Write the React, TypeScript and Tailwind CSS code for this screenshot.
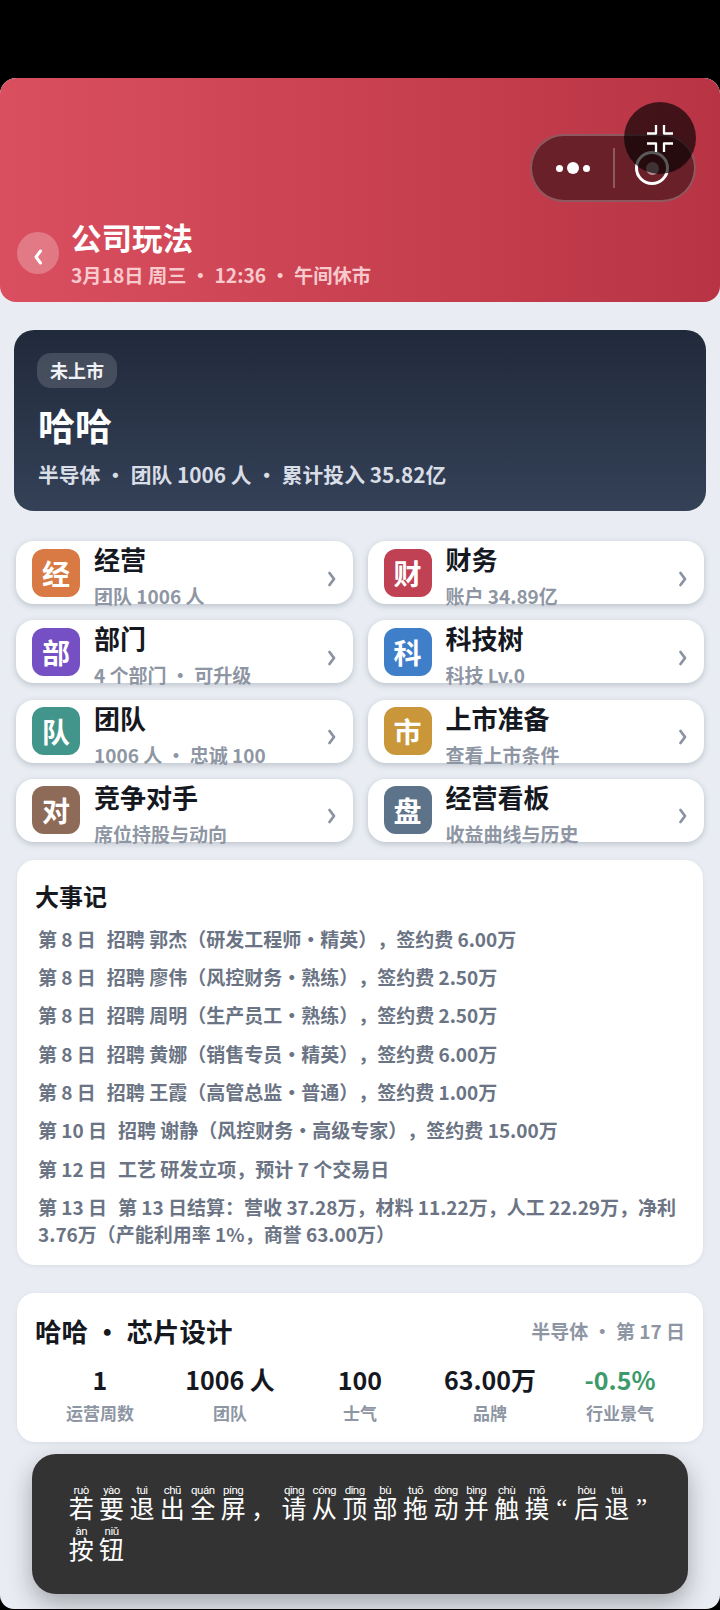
const cjk = "font-['Noto_Sans_CJK_SC','Noto_Sans',sans-serif]";

const menus = [
  { icon: "经", color: "bg-[#d97a45]", title: "经营", sub: "团队 1006 人" },
  { icon: "财", color: "bg-[#bf4153]", title: "财务", sub: "账户 34.89亿" },
  { icon: "部", color: "bg-[#7450c4]", title: "部门", sub: "4 个部门 · 可升级" },
  { icon: "科", color: "bg-[#3f7fc9]", title: "科技树", sub: "科技 Lv.0" },
  { icon: "队", color: "bg-[#41958a]", title: "团队", sub: "1006 人 · 忠诚 100" },
  { icon: "市", color: "bg-[#c9963a]", title: "上市准备", sub: "查看上市条件" },
  { icon: "对", color: "bg-[#8e6b58]", title: "竞争对手", sub: "席位持股与动向" },
  { icon: "盘", color: "bg-[#5c7389]", title: "经营看板", sub: "收益曲线与历史" },
];

const events = [
  { day: "第 8 日", text: "招聘 郭杰（研发工程师·精英），签约费 6.00万" },
  { day: "第 8 日", text: "招聘 廖伟（风控财务·熟练），签约费 2.50万" },
  { day: "第 8 日", text: "招聘 周明（生产员工·熟练），签约费 2.50万" },
  { day: "第 8 日", text: "招聘 黄娜（销售专员·精英），签约费 6.00万" },
  { day: "第 8 日", text: "招聘 王霞（高管总监·普通），签约费 1.00万" },
  { day: "第 10 日", text: "招聘 谢静（风控财务·高级专家），签约费 15.00万" },
  { day: "第 12 日", text: "工艺 研发立项，预计 7 个交易日" },
  { day: "第 13 日", text: "第 13 日结算：营收 37.28万，材料 11.22万，人工 22.29万，净利 3.76万（产能利用率 1%，商誉 63.00万）" },
];

const stats = [
  { value: "1", label: "运营周数", color: "text-[#15181e]" },
  { value: "1006 人", label: "团队", color: "text-[#15181e]" },
  { value: "100", label: "士气", color: "text-[#15181e]" },
  { value: "63.00万", label: "品牌", color: "text-[#15181e]" },
  { value: "-0.5%", label: "行业景气", color: "text-[#3d9a6a]" },
];

const line1: [string, string][] = [
  ["若", "ruò"], ["要", "yào"], ["退", "tuì"], ["出", "chū"], ["全", "quán"], ["屏", "píng"], ["，", ""],
  ["请", "qǐng"], ["从", "cóng"], ["顶", "dǐng"], ["部", "bù"], ["拖", "tuō"], ["动", "dòng"], ["并", "bìng"],
  ["触", "chù"], ["摸", "mō"], ["“", ""], ["后", "hòu"], ["退", "tuì"], ["”", ""],
];
const line2: [string, string][] = [["按", "àn"], ["钮", "niǔ"]];

function Chevron() {
  return (
    <svg width="10" height="16" viewBox="0 0 10 16" fill="none" className="mt-[12px] shrink-0">
      <path d="M2.5 2 L7 8 L2.5 14" stroke="#8a93a1" strokeWidth="2.8" strokeLinecap="round" strokeLinejoin="round" />
    </svg>
  );
}

function PinyinLine({ items }: { items: [string, string][] }) {
  return (
    <div className="flex h-[41px] items-end">
      {items.map(([ch, py], i) => {
        const quote = ch === "“" || ch === "”";
        return (
          <div
            key={i}
            className={
              quote
                ? "flex h-[28px] w-[19px] shrink-0 items-center justify-center font-['Liberation_Serif',serif] text-[25px] leading-none text-white"
                : "relative flex h-[28px] w-[30.4px] shrink-0 items-center justify-center text-[25px] leading-none text-white"
            }
          >
            {py && (
              <span className="absolute top-[-8px] left-1/2 -translate-x-1/2 font-['Roboto',sans-serif] text-[11.5px] leading-none tracking-[-0.5px] text-white">
                {py}
              </span>
            )}
            {ch}
          </div>
        );
      })}
    </div>
  );
}

export default function App() {
  return (
    <div className={`h-[1610px] w-[720px] overflow-hidden bg-black pt-[78px] ${cjk}`}>
      <div className="relative h-[1531px] overflow-hidden rounded-t-[16px] rounded-b-[14px] bg-[#e9edf3]">
        {/* header */}
        <header className="relative flex h-[224px] items-end gap-[13px] rounded-[16px] bg-gradient-to-r from-[#da4f5f] to-[#b83444] pb-[14px] pl-[17px]">
          <button className="mb-[14px] flex h-[42px] w-[42px] items-center justify-center rounded-full bg-white/25">
            <svg width="12" height="18" viewBox="0 0 12 18" fill="none" className="mt-[8px]">
              <path d="M8.5 3 L4 9 L8.5 15" stroke="white" strokeWidth="3" strokeLinecap="round" strokeLinejoin="round" />
            </svg>
          </button>
          <div className="-ml-[1px]">
            <h1 className="text-[30.5px] leading-[38px] font-bold text-white">公司玩法</h1>
            <p className="mt-[6px] text-[19.25px] leading-[26px] font-semibold text-[#f8c9cd]">3月18日 周三 · 12:36 · 午间休市</p>
          </div>
        </header>

        {/* wechat capsule */}
        <div className="absolute top-[56px] left-[530px] flex h-[68px] w-[166px] items-center rounded-full border-2 border-white/25 bg-[#6a2028]">
          <div className="flex w-[81px] items-center justify-center gap-[4px]">
            <span className="h-[7px] w-[7px] rounded-full bg-white" />
            <span className="h-[12px] w-[12px] rounded-full bg-white" />
            <span className="h-[7px] w-[7px] rounded-full bg-white" />
          </div>
          <div className="h-[40px] w-[2px] bg-white/25" />
          <div className="flex flex-1 items-center justify-center pr-[5px]">
            <div className="flex h-[34px] w-[34px] items-center justify-center rounded-full border-[3px] border-white">
              <span className="h-[13px] w-[13px] rounded-full bg-white/50" />
            </div>
          </div>
        </div>
        <div className="absolute top-[24px] left-[624px] flex h-[72px] w-[72px] items-center justify-center rounded-full bg-black/65">
          <svg width="26" height="27" viewBox="0 0 26 27" fill="none" stroke="white" strokeWidth="2.3" strokeLinejoin="round">
            <path d="M0 8.5 H9 V0" />
            <path d="M26 8.5 H17 V0" />
            <path d="M0 18.5 H9 V27" />
            <path d="M26 18.5 H17 V27" />
          </svg>
        </div>

        {/* company hero */}
        <section className="mx-[14px] mt-[28px] h-[181px] rounded-[20px] bg-gradient-to-b from-[#212a3b] to-[#344157] pt-[23px] pl-[24px]">
          <span className="-ml-[1px] inline-flex h-[35px] w-[80px] items-center justify-center rounded-[14px] bg-white/15 text-[18px] font-semibold text-[#f0f2f5]">未上市</span>
          <h2 className="mt-[10px] text-[37px] leading-[54px] font-bold text-white">哈哈</h2>
          <p className="mt-[7px] text-[20.8px] leading-[30px] font-semibold text-[#d8dde6]">半导体 · 团队 1006 人 · 累计投入 35.82亿</p>
        </section>

        {/* entries */}
        <div className="mx-[16px] mt-[30px] grid grid-cols-2 gap-x-[15px] gap-y-[16.3px]">
          {menus.map((m) => (
            <div key={m.title} className="flex h-[63px] items-center rounded-[18px] bg-white pr-[16px] pl-[16px] shadow-[0_2px_6px_rgba(30,40,60,0.22)]">
              <div className={`flex h-[48px] w-[48px] shrink-0 items-center justify-center rounded-[12px] text-[28px] font-bold text-white ${m.color}`}>{m.icon}</div>
              <div className="ml-[14px] h-[63px] min-w-0 flex-1">
                <div className="text-[26px] leading-[36px] font-bold text-[#15181e]">{m.title}</div>
                <div className="mt-[1px] text-[19px] leading-[36px] font-semibold whitespace-nowrap text-[#8e96a4]">{m.sub}</div>
              </div>
              <Chevron />
            </div>
          ))}
        </div>

        {/* events */}
        <section className="mx-[17px] mt-[18px] h-[405px] rounded-[18px] bg-white px-[18px] pt-[18px] shadow-[0_1px_4px_rgba(30,40,60,0.08)]">
          <h3 className="text-[24px] leading-[36px] font-bold text-[#15181e]">大事记</h3>
          <ul className="mt-[11px] flex flex-col gap-[11.3px] pl-[3px]">
            {events.map((e, i) => (
              <li key={i} className="text-[19px] leading-[27px] font-semibold text-[#6b7484] [text-spacing-trim:space-all]">
                <span className="mr-[11px]">{e.day}</span>
                {e.text}
              </li>
            ))}
          </ul>
        </section>

        {/* summary */}
        <section className="mx-[17px] mt-[28px] h-[149px] rounded-[18px] bg-white px-[18px] pt-[20px] shadow-[0_1px_4px_rgba(30,40,60,0.08)]">
          <div className="flex items-center justify-between">
            <h3 className="text-[26.5px] leading-[36px] font-bold text-[#15181e]">哈哈 · 芯片设计</h3>
            <span className="text-[19px] leading-[30px] font-semibold text-[#8e96a4]">半导体 · 第 17 日</span>
          </div>
          <div className="mt-[12px] grid grid-cols-5">
            {stats.map((s) => (
              <div key={s.label} className="text-center">
                <div className={`text-[25px] leading-[36px] font-bold ${s.color}`}>{s.value}</div>
                <div className="mt-[3px] text-[17px] leading-[26px] font-semibold text-[#8e96a4]">{s.label}</div>
              </div>
            ))}
          </div>
        </section>

        {/* system toast */}
        <div className="absolute top-[1376px] left-[32px] h-[140px] w-[656px] rounded-[24px] bg-[#333333] pt-[26px] pl-[34px] shadow-[0_10px_24px_rgba(0,0,0,0.3)]">
          <PinyinLine items={line1} />
          <PinyinLine items={line2} />
        </div>
      </div>
    </div>
  );
}
